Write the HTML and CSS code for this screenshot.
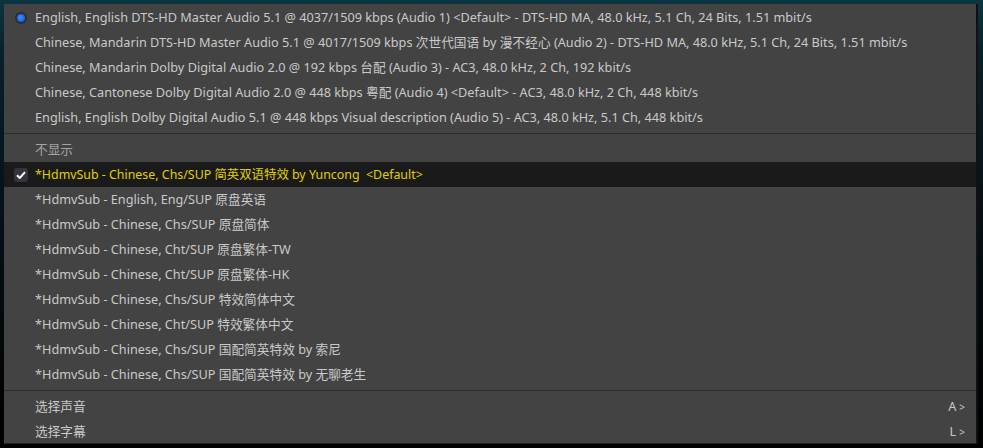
FILE: index.html
```html
<!DOCTYPE html>
<html lang="zh-CN">
<head>
  <meta charset="UTF-8" />
  <title>轨道菜单</title>
  <link rel="stylesheet" href="styles.css">
</head>
<body>
  <div class="fondo">
    <div class="menu">
      <div class="item">
        <span class="marca"><span class="radio"></span></span>
        <span class="texto">English, English DTS-HD Master Audio 5.1 @ 4037/1509 kbps (Audio 1) &lt;Default&gt; - DTS-HD MA, 48.0 kHz, 5.1 Ch, 24 Bits, 1.51 mbit/s</span>
      </div>
      <div class="item">
        <span class="marca"></span>
        <span class="texto">Chinese, Mandarin DTS-HD Master Audio 5.1 @ 4017/1509 kbps 次世代国语 by 漫不经心 (Audio 2) - DTS-HD MA, 48.0 kHz, 5.1 Ch, 24 Bits, 1.51 mbit/s</span>
      </div>
      <div class="item">
        <span class="marca"></span>
        <span class="texto">Chinese, Mandarin Dolby Digital Audio 2.0 @ 192 kbps 台配 (Audio 3) - AC3, 48.0 kHz, 2 Ch, 192 kbit/s</span>
      </div>
      <div class="item">
        <span class="marca"></span>
        <span class="texto">Chinese, Cantonese Dolby Digital Audio 2.0 @ 448 kbps 粤配 (Audio 4) &lt;Default&gt; - AC3, 48.0 kHz, 2 Ch, 448 kbit/s</span>
      </div>
      <div class="item">
        <span class="marca"></span>
        <span class="texto">English, English Dolby Digital Audio 5.1 @ 448 kbps Visual description (Audio 5) - AC3, 48.0 kHz, 5.1 Ch, 448 kbit/s</span>
      </div>

      <div class="separador"></div>

      <div class="item apagado">
        <span class="marca"></span>
        <span class="texto">不显示</span>
      </div>
      <div class="item activo">
        <span class="marca">
          <span class="check">
            <svg width="10" height="8" viewBox="0 0 10 8"><path d="M1 4.2 L3.8 7 L9 1.2" fill="none" stroke="#fff" stroke-width="2"/></svg>
          </span>
        </span>
        <span class="texto">*HdmvSub - Chinese, Chs/SUP 简英双语特效 by Yuncong &nbsp;&lt;Default&gt;</span>
      </div>
      <div class="item">
        <span class="marca"></span>
        <span class="texto">*HdmvSub - English, Eng/SUP 原盘英语</span>
      </div>
      <div class="item">
        <span class="marca"></span>
        <span class="texto">*HdmvSub - Chinese, Chs/SUP 原盘简体</span>
      </div>
      <div class="item">
        <span class="marca"></span>
        <span class="texto">*HdmvSub - Chinese, Cht/SUP 原盘繁体-TW</span>
      </div>
      <div class="item">
        <span class="marca"></span>
        <span class="texto">*HdmvSub - Chinese, Cht/SUP 原盘繁体-HK</span>
      </div>
      <div class="item">
        <span class="marca"></span>
        <span class="texto">*HdmvSub - Chinese, Chs/SUP 特效简体中文</span>
      </div>
      <div class="item">
        <span class="marca"></span>
        <span class="texto">*HdmvSub - Chinese, Cht/SUP 特效繁体中文</span>
      </div>
      <div class="item">
        <span class="marca"></span>
        <span class="texto">*HdmvSub - Chinese, Chs/SUP 国配简英特效 by 索尼</span>
      </div>
      <div class="item">
        <span class="marca"></span>
        <span class="texto">*HdmvSub - Chinese, Chs/SUP 国配简英特效 by 无聊老生</span>
      </div>

      <div class="separador"></div>

      <div class="item">
        <span class="marca"></span>
        <span class="texto">选择声音</span>
        <span class="atajo">A<span class="flecha">&gt;</span></span>
      </div>
      <div class="item">
        <span class="marca"></span>
        <span class="texto">选择字幕</span>
        <span class="atajo">L<span class="flecha">&gt;</span></span>
      </div>
    </div>
  </div>
</body>
</html>
```

FILE: styles.css
```css
body {
  margin: 0;
  background: #000;
  font-family: 'Segoe UI', 'Noto Sans', 'Noto Sans CJK SC', sans-serif;
}

.fondo {
  width: 983px;
  height: 448px;
  padding: 4px 3px 4px 4px;
  box-sizing: border-box;
  background: linear-gradient(180deg, #0c3442 0%, #082029 12%, #040c10 60%, #000 100%);
}

.menu {
  width: 974px;
  height: 440px;
  box-sizing: border-box;
  background: #434343;
  border-right: 2px solid #111;
  border-bottom: 1px solid #222;
  padding-top: 1px;
}

.item {
  display: flex;
  align-items: center;
  height: 25px;
  color: #c9c9c9;
  font-size: 12.7px;
  white-space: nowrap;
}

.marca {
  width: 31px;
  display: flex;
  justify-content: center;
  padding-left: 2px;
  box-sizing: border-box;
}

.texto {
  flex: 1;
  padding-bottom: 2px;
}

.apagado {
  color: #a4a4a4;
}

.activo {
  background: #1a1a1a;
  color: #e0d000;
}

.activo .texto {
  font-size: 12.4px;
}

.radio {
  width: 8px;
  height: 8px;
  border-radius: 50%;
  background: radial-gradient(circle at 45% 45%, #3d8cff 0%, #1a63e0 70%);
  border: 2px solid #2a2b35;
}

.check {
  width: 14px;
  height: 14px;
  border-radius: 3px;
  background: #34343e;
  display: flex;
  align-items: center;
  justify-content: center;
}

.separador {
  height: 1px;
  background: #2c2c30;
  margin: 3px 0 3px;
}

.atajo {
  padding-right: 11px;
  padding-bottom: 2px;
  color: #c9c9c9;
}

.flecha {
  font-size: 10px;
  margin-left: 3px;
}
```
